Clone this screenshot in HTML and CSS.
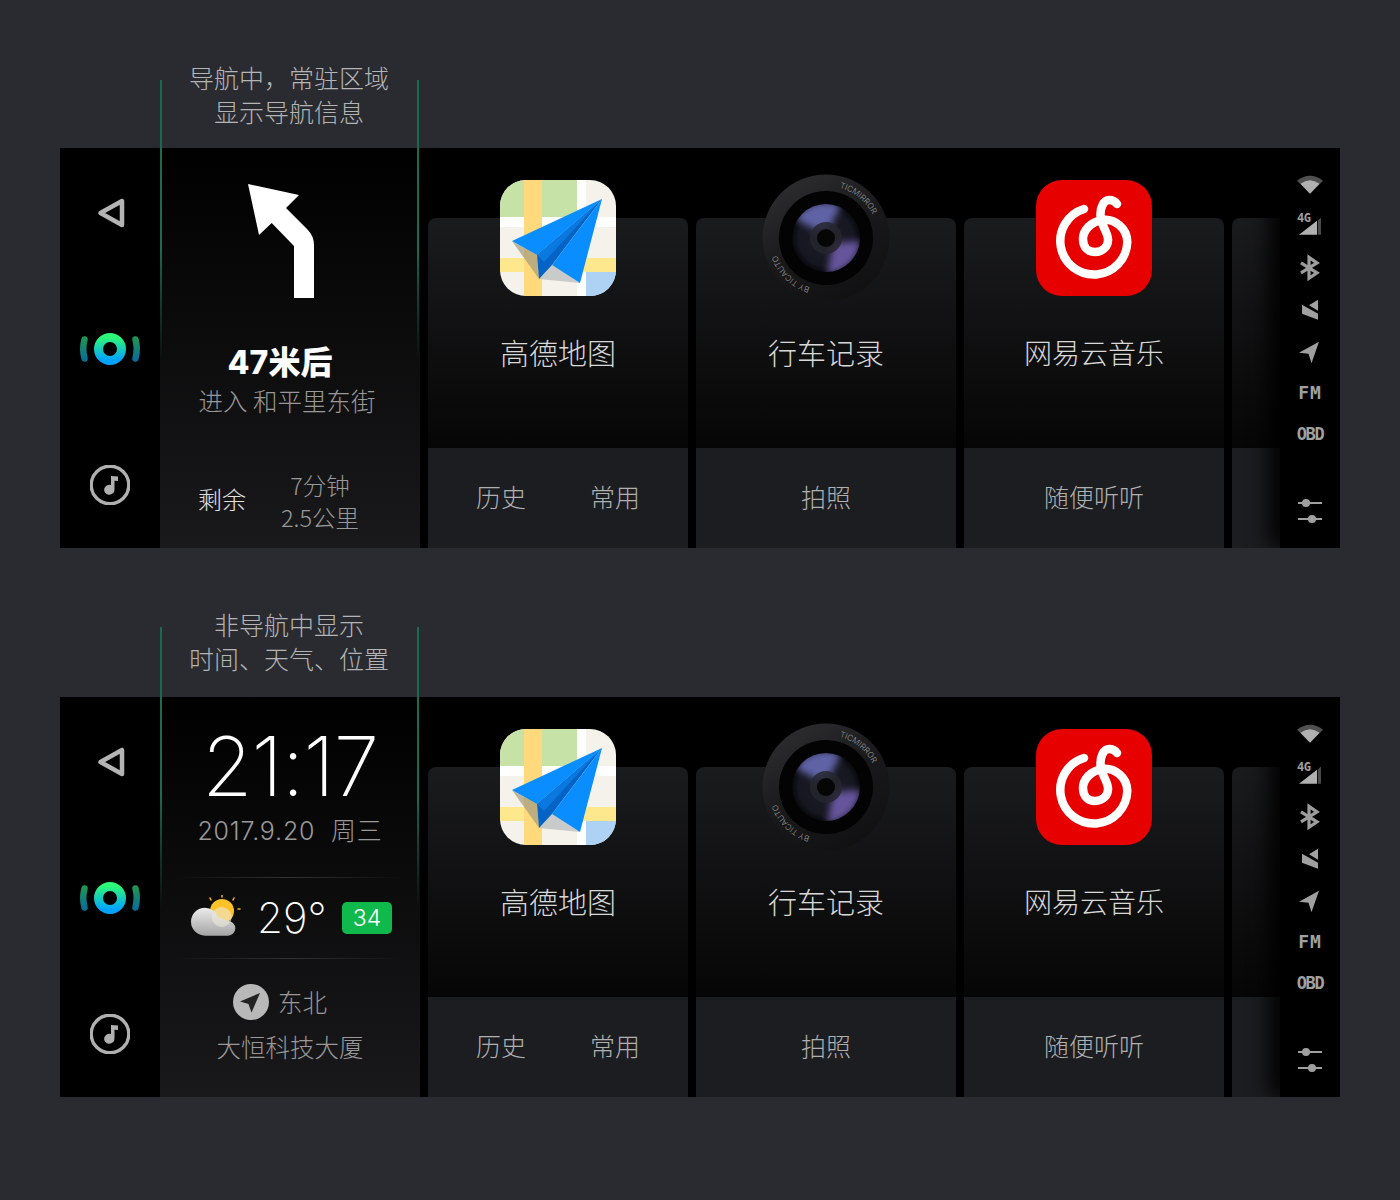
FILE: index.html
```html
<!DOCTYPE html>
<html lang="zh">
<head>
<meta charset="utf-8">
<title>导航</title>
<link rel="stylesheet" href="styles.css">
</head>
<body>
<svg class="defs" aria-hidden="true">
  <defs>
    <linearGradient id="vo" x1="0" y1="0" x2="0" y2="1"><stop offset="0" stop-color="#2df877"/><stop offset="1" stop-color="#00a2ff"/></linearGradient>
    <linearGradient id="vos" x1="0" y1="0" x2="0" y2="1"><stop offset="0" stop-color="#1f9257"/><stop offset="1" stop-color="#0b6f94"/></linearGradient>
    <linearGradient id="cl" x1="0" y1="0" x2="0" y2="1"><stop offset="0" stop-color="#ececec"/><stop offset="1" stop-color="#a4a4a4"/></linearGradient>
    <linearGradient id="ring" x1="0.2" y1="0" x2="0.8" y2="1"><stop offset="0" stop-color="#2e2e31"/><stop offset="0.5" stop-color="#19191b"/><stop offset="1" stop-color="#101011"/></linearGradient>
    <radialGradient id="lens" cx="0.5" cy="0.5" r="0.5"><stop offset="0" stop-color="#1c1c27"/><stop offset="0.8" stop-color="#171722"/><stop offset="1" stop-color="#08080c"/></radialGradient>
    <filter id="bl"><feGaussianBlur stdDeviation="3.500"/></filter>
    <clipPath id="lc"><circle cx="65" cy="65" r="34"/></clipPath>
    <path id="arcT" d="M65 13 A52 52 0 0 1 117 65"/>
    <path id="arcB" d="M65 117 A52 52 0 0 1 13 65"/>

    <symbol id="i-back" viewBox="0 0 40 40"><path d="M10.500 20 L32 8 V32 Z" fill="none" stroke="#b4b4b4" stroke-width="4.500" stroke-linejoin="round"/></symbol>
    <symbol id="i-vo" viewBox="0 0 64 40">
      <circle cx="32" cy="20" r="11.500" fill="none" stroke="url(#vo)" stroke-width="9"/>
      <path d="M6.500 10.500 Q4 20 6.500 29.500" fill="none" stroke="url(#vos)" stroke-width="6.500" stroke-linecap="round"/>
      <path d="M57.500 10.500 Q60 20 57.500 29.500" fill="none" stroke="url(#vos)" stroke-width="6.500" stroke-linecap="round"/>
    </symbol>
    <symbol id="i-music" viewBox="0 0 40 40">
      <circle cx="20" cy="20" r="18.800" fill="none" stroke="#b0b0b0" stroke-width="3.400"/>
      <path d="M21 11 L28 11.500 V16 L24.500 15.800 V24.500 A5.200 5 0 1 1 21 20 Z" fill="#b0b0b0"/>
    </symbol>

    <symbol id="i-amap" viewBox="0 0 116 116">
      <rect width="116" height="116" fill="#f5f2ec"/>
      <rect width="24" height="37" fill="#c7e2a7"/>
      <rect x="42" width="35" height="37" fill="#c7e2a7"/>
      <rect y="37" width="116" height="10" fill="#fff"/>
      <rect x="77" width="9" height="116" fill="#fff"/>
      <rect y="78" width="116" height="14" fill="#fde88e"/>
      <rect x="24" width="18" height="116" fill="#ffd97c"/>
      <rect x="86" y="92" width="30" height="24" fill="#aed2f4"/>
      <path d="M12 61 L37 75 L39 99 Z" fill="#a89f80" opacity=".75"/>
      <path d="M39 99 L52 85 L80 103 Z" fill="#c8cbc9"/>
      <path d="M102 19 L37 75 L39 99 L52 85 Z" fill="#0463c4"/>
      <path d="M102 19 L37 75 L44 82 Z" fill="#0a78de"/>
      <path d="M102 19 L12 61 L37 75 Z" fill="#0a8eff"/>
      <path d="M102 19 L52 85 L80 103 Z" fill="#0a8eff"/>
    </symbol>

    <symbol id="i-cam" viewBox="0 0 130 130">
      <circle cx="65" cy="65" r="63.500" fill="url(#ring)"/>
      <circle cx="65" cy="65" r="47" fill="#030304"/>
      <circle cx="65" cy="65" r="34" fill="url(#lens)"/>
      <g clip-path="url(#lc)" filter="url(#bl)">
        <path d="M65 62 L34 46 Q50 22 80 32 Z" fill="#5f62a4"/>
        <path d="M72 70 L100 68 Q96 96 66 102 Z" fill="#66559c"/>
      </g>
      <circle cx="65" cy="65" r="16" fill="#26262e" fill-opacity=".85"/>
      <circle cx="65" cy="65" r="9" fill="#060607"/>
      <text class="camtext" transform="rotate(15 65 65)"><textPath href="#arcT">TICMIRROR</textPath></text>
      <text class="camtext" transform="rotate(18 65 65)"><textPath href="#arcB">BY TICAUTO</textPath></text>
    </symbol>

    <symbol id="i-music163" viewBox="0 0 116 116">
      <rect width="116" height="116" fill="#e60000"/>
      <path d="M48 29 A33.500 33.500 0 1 0 91.300 62 C91.300 48 78 38 66 40 C55 42 47 50 47 59 C47 67 52 72 59 72 C67 72 72.500 66 72 59 C71.500 52 65 45 64.500 36 C64 27 68 20 73 20 C76 20 79 21 81 24" fill="none" stroke="#fff" stroke-width="8.500" stroke-linecap="round"/>
    </symbol>

    <symbol id="i-wifi" viewBox="0 0 30 24">
      <path d="M15 21 L2 8 Q15 -2 28 8 Z" fill="#505050"/>
      <path d="M15 21 L5.500 11 Q15 4 24.500 11 Z" fill="#b0b0b0"/>
    </symbol>
    <symbol id="i-signal" viewBox="0 0 30 24">
      <path d="M4 20 L22 6 V20 Z" fill="#b0b0b0"/>
      <path d="M22.800 5.500 L26 3 V20 H22.800 Z" fill="#4a4a4a"/>
    </symbol>
    <symbol id="i-bt" viewBox="0 0 30 24">
      <path d="M6 7 L22 17 L14 22.500 V1.500 L22 7 L6 17" fill="none" stroke="#9c9c9c" stroke-width="3.200"/>
    </symbol>
    <symbol id="i-mute" viewBox="0 0 30 24">
      <path d="M14 7.500 L23 2 V13 Z M7 7 L23 16 V22 L7 16 Z" fill="#a0a0a0"/>
    </symbol>
    <symbol id="i-loc" viewBox="0 0 30 24">
      <path d="M24 2 L4 13 L13.500 14 L16.500 23.500 Z" fill="#a0a0a0"/>
    </symbol>
    <symbol id="i-sliders" viewBox="0 0 30 24">
      <path d="M3 4 H27 M3 20 H27" stroke="#a0a0a0" stroke-width="2"/>
      <circle cx="11" cy="4" r="4" fill="#a0a0a0"/><circle cx="17" cy="20" r="4" fill="#a0a0a0"/>
    </symbol>
    <symbol id="i-weather" viewBox="0 0 54 46">
      <g stroke="#f5b81f" stroke-width="1.500" stroke-linecap="round">
        <path d="M32 0 V2 M20 3 L21 5 M44 3 L43 5 M48 14 H50"/>
      </g>
      <circle cx="32" cy="16" r="12" fill="#ffc227"/>
      <path d="M15 12.700 A14 14 0 0 0 15 40.700 H38 A7.300 7.300 0 0 0 38 26 L28 22 A14 14 0 0 0 15 12.700 Z" fill="url(#cl)"/>
      <circle cx="31.700" cy="22" r="10" fill="#ece8da" opacity=".6"/>
    </symbol>
  </defs>
</svg>

<section class="screen screen--nav">
  <div class="note">导航中，常驻区域<br>显示导航信息</div>
  <i class="guide guide--l"></i><i class="guide guide--r"></i>
  <div class="panel">
    <aside class="rail">
      <svg class="rail-ico"><use href="#i-back"/></svg>
      <svg class="rail-vo"><use href="#i-vo"/></svg>
      <svg class="rail-ico"><use href="#i-music"/></svg>
    </aside>
    <div class="info">
      <svg class="turn" viewBox="0 0 260 114"><path d="M88 0 L139 11 L126 24 L147 45 Q154 52 154 61 V114 H134 V62 L111.700 39 L99 51 Z" fill="#fff"/></svg>
      <div class="dist">47米后</div>
      <div class="road">进入 和平里东街</div>
      <div class="remain">
        <span class="remain-k">剩余</span>
        <span class="remain-v">7分钟<br>2.5公里</span>
      </div>
    </div>
    <div class="tiles">
      <article class="tile">
        <div class="tile-top"><svg class="app"><use href="#i-amap"/></svg><h2 class="tile-name tile-name--four">高德地图</h2></div>
        <div class="tile-act"><span>历史</span><span>常用</span></div>
      </article>
      <article class="tile">
        <div class="tile-top"><svg class="app app--cam"><use href="#i-cam"/></svg><h2 class="tile-name tile-name--four">行车记录</h2></div>
        <div class="tile-act"><span>拍照</span></div>
      </article>
      <article class="tile">
        <div class="tile-top"><svg class="app"><use href="#i-music163"/></svg><h2 class="tile-name">网易云音乐</h2></div>
        <div class="tile-act"><span>随便听听</span></div>
      </article>
      <article class="tile">
        <div class="tile-top tile-top--blank"></div>
        <div class="tile-act"></div>
      </article>
    </div>
    <aside class="status">
      <svg class="st"><use href="#i-wifi"/></svg>
      <div class="st st--4g"><span class="g4">4G</span><svg class="st"><use href="#i-signal"/></svg></div>
      <svg class="st"><use href="#i-bt"/></svg>
      <svg class="st"><use href="#i-mute"/></svg>
      <svg class="st"><use href="#i-loc"/></svg>
      <div class="st st-t st-fm">FM</div>
      <div class="st st-t st-obd">OBD</div>
      <svg class="st st--end"><use href="#i-sliders"/></svg>
    </aside>
  </div>
</section>

<section class="screen screen--idle">
  <div class="note">非导航中显示<br>时间、天气、位置</div>
  <i class="guide guide--l"></i><i class="guide guide--r"></i>
  <div class="panel">
    <aside class="rail">
      <svg class="rail-ico"><use href="#i-back"/></svg>
      <svg class="rail-vo"><use href="#i-vo"/></svg>
      <svg class="rail-ico"><use href="#i-music"/></svg>
    </aside>
    <div class="info">
      <div class="clock">21:17</div>
      <div class="date">2017.9.20&nbsp; 周三</div>
      <div class="rule rule--a"></div>
      <div class="weather">
        <svg class="w-ico"><use href="#i-weather"/></svg>
        <span class="temp">29°</span>
        <span class="aqi">34</span>
      </div>
      <div class="rule"></div>
      <div class="dir">
        <svg class="dir-ico" viewBox="0 0 36 36"><circle cx="18" cy="18" r="18" fill="#b8b8b8"/><path d="M27 9 L7 17.500 L15.500 20 L18.500 28.500 Z" fill="#222"/></svg>
        <span>东北</span>
      </div>
      <div class="place">大恒科技大厦</div>
    </div>
    <div class="tiles">
      <article class="tile">
        <div class="tile-top"><svg class="app"><use href="#i-amap"/></svg><h2 class="tile-name tile-name--four">高德地图</h2></div>
        <div class="tile-act"><span>历史</span><span>常用</span></div>
      </article>
      <article class="tile">
        <div class="tile-top"><svg class="app app--cam"><use href="#i-cam"/></svg><h2 class="tile-name tile-name--four">行车记录</h2></div>
        <div class="tile-act"><span>拍照</span></div>
      </article>
      <article class="tile">
        <div class="tile-top"><svg class="app"><use href="#i-music163"/></svg><h2 class="tile-name">网易云音乐</h2></div>
        <div class="tile-act"><span>随便听听</span></div>
      </article>
      <article class="tile">
        <div class="tile-top tile-top--blank"></div>
        <div class="tile-act"></div>
      </article>
    </div>
    <aside class="status">
      <svg class="st"><use href="#i-wifi"/></svg>
      <div class="st st--4g"><span class="g4">4G</span><svg class="st"><use href="#i-signal"/></svg></div>
      <svg class="st"><use href="#i-bt"/></svg>
      <svg class="st"><use href="#i-mute"/></svg>
      <svg class="st"><use href="#i-loc"/></svg>
      <div class="st st-t st-fm">FM</div>
      <div class="st st-t st-obd">OBD</div>
      <svg class="st st--end"><use href="#i-sliders"/></svg>
    </aside>
  </div>
</section>
</body>
</html>
```
FILE: styles.css
```css
* { box-sizing: border-box; margin: 0; padding: 0; }
html, body { height: 1200px; overflow: hidden; }
body {
  background: #292b30;
  font-family: "Noto Sans CJK SC", "Noto Sans", sans-serif;
  font-weight: 300;
  padding: 0 60px;
}
.defs { position: absolute; width: 0; height: 0; }
.screen { position: relative; }
.screen--nav { padding-top: 60px; }
.screen--idle { padding-top: 59px; }
.note {
  width: 458px;
  margin-bottom: 20px;
  text-align: center;
  font-size: 25px;
  line-height: 34px;
  color: #b4b4b4;
}
.screen--idle .note { margin-bottom: 22px; }
.guide {
  position: absolute;
  width: 2px;
  height: 281px;
  background: linear-gradient(#1c6a52 0, #1c6a52 60%, rgba(28,106,82,0) 100%);
  z-index: 3;
}
.guide--l { left: 100px; }
.guide--r { left: 357px; }
.screen--nav .guide { top: 80px; }
.screen--idle .guide { top: 79px; }

.panel { display: flex; width: 1280px; height: 400px; background: #000; overflow: hidden; }
.rail {
  width: 100px;
  flex: none;
  display: flex;
  flex-direction: column;
  align-items: center;
  justify-content: space-between;
  padding: 45px 0 43px;
}
.rail-ico { width: 40px; height: 40px; display: block; }
.rail-vo { width: 64px; height: 40px; display: block; }

.info {
  width: 260px;
  flex: none;
  display: flex;
  flex-direction: column;
  background: linear-gradient(#000 0, #19191b 100%);
}
.turn { width: 260px; height: 114px; display: block; margin-top: 36px; flex: none; }
.dist {
  margin-top: 45px;
  padding-right: 20px;
  text-align: center;
  font-size: 32px;
  line-height: 40px;
  font-weight: 800;
  color: #fff;
  font-family: "Inter", "Noto Sans CJK SC", sans-serif;
}
.road {
  margin-top: -2px;
  padding-right: 6px;
  text-align: center;
  font-size: 24.500px;
  line-height: 40px;
  color: #999;
  white-space: nowrap;
}
.remain { margin-top: auto; margin-bottom: 15px; display: flex; align-items: center; padding-left: 38px; }
.remain-k { font-size: 24px; color: #e0e0e0; line-height: 32px; margin-top: -4px; }
.remain-v { width: 148px; text-align: center; font-size: 23.500px; line-height: 32px; color: #999; }

.clock {
  margin-top: 25px;
  text-align: center;
  font-family: "Inter", sans-serif;
  font-weight: 200;
  font-size: 82px;
  line-height: 90px;
  letter-spacing: -1px;
  color: #fff;
}
.date {
  margin-top: 4px;
  text-align: center;
  font-size: 25px;
  line-height: 30px;
  letter-spacing: .8px;
  color: #999;
  font-family: "Inter", "Noto Sans CJK SC", sans-serif;
}
.rule { height: 1px; margin: 0 18px; flex: none; background: linear-gradient(90deg, rgba(60,60,60,0), #333 50%, rgba(60,60,60,0)); }
.rule--a { margin-top: 31px; }
.weather { height: 80px; flex: none; display: flex; align-items: center; padding-left: 30px; }
.w-ico { width: 54px; height: 46px; display: block; flex: none; }
.temp { width: 98px; flex: none; padding-left: 13px; font-family: "Inter", sans-serif; font-weight: 200; font-size: 42px; color: #fff; line-height: 50px; }
.aqi { width: 50px; height: 32px; flex: none; background: #10b94b; border-radius: 5px; text-align: center; color: #fff; font-family: "Inter", sans-serif; font-size: 23px; line-height: 32px; }
.dir { margin-top: 25px; display: flex; align-items: center; justify-content: center; gap: 9px; font-size: 24.500px; line-height: 36px; color: #999; padding-right: 20px; }
.dir-ico { width: 36px; height: 36px; display: block; }
.place { margin-top: 10px; text-align: center; font-size: 24.500px; line-height: 34px; color: #999; white-space: nowrap; }

.tiles { flex: 1; min-width: 0; display: flex; gap: 8px; padding-left: 8px; overflow: hidden; }
.tile { width: 260px; flex: none; display: flex; flex-direction: column; }
.tile-top {
  margin-top: 70px;
  height: 230px;
  display: flex;
  flex-direction: column;
  align-items: center;
  border-radius: 8px 8px 0 0;
  background: linear-gradient(#1a1b1d 0, #060606 100%);
}
.app { width: 116px; height: 116px; border-radius: 26px; display: block; flex: none; margin-top: -38px; }
.app--cam { width: 130px; height: 130px; border-radius: 50%; margin-top: -45px; margin-bottom: -7px; }
.tile-name { margin-top: 36px; font-size: 28px; line-height: 40px; font-weight: 300; color: #d8d8d8; }
.tile-name--four { font-size: 29px; }
.tile-act {
  height: 100px;
  flex: none;
  display: flex;
  align-items: center;
  justify-content: space-around;
  padding: 0 16px 4px;
  background: #1c1d20;
  font-size: 25px;
  color: #b0b0b0;
}
.camtext { font-family: "Inter", sans-serif; font-size: 8px; fill: #9a9a9a; }

.status {
  width: 60px;
  flex: none;
  position: relative;
  z-index: 2;
  display: flex;
  flex-direction: column;
  align-items: center;
  padding: 16px 0 25px;
  background: #000;
  box-shadow: -12px 0 20px rgba(0,0,0,.9);
}
.st { width: 30px; height: 41.670px; display: block; flex: none; }
.st--4g { position: relative; }
.g4 { position: absolute; left: 2px; top: 7px; font-family: "DejaVu Sans Mono", monospace; font-weight: 700; font-size: 12px; line-height: 10px; letter-spacing: -.5px; color: #a0a0a0; }
.st-t { text-align: center; font-family: "DejaVu Sans Mono", monospace; font-weight: 700; line-height: 41.670px; color: #a0a0a0; white-space: nowrap; }
.st-fm { font-size: 18px; letter-spacing: 1px; }
.st-obd { font-size: 17px; letter-spacing: -1.400px; margin: 0 -4px; width: 38px; }
.st--end { margin-top: auto; height: 24px; }
```
